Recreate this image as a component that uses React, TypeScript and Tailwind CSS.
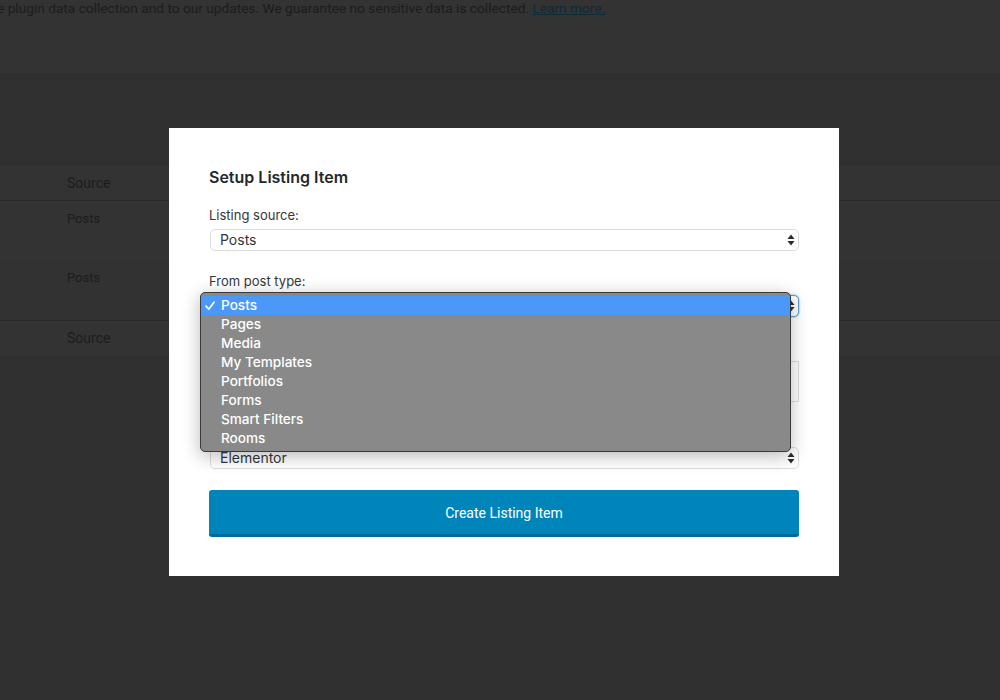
import React from "react";

const Arrows = ({ color = "#2c2c2c" }: { color?: string }) => (
  <svg width="8" height="12" viewBox="0 0 8 12" className="shrink-0">
    <path d="M4 0.5 L7.5 5 L0.5 5 Z" fill={color} />
    <path d="M4 11.5 L7.5 7 L0.5 7 Z" fill={color} />
  </svg>
);

const FakeSelect = ({ value, focused = false }: { value: string; focused?: boolean }) => (
  <div
    className={
      "ml-px flex h-[22px] items-center justify-between rounded-[5px] border bg-white pl-[9px] pr-[3px] text-[14px] text-[#32373c] " +
      (focused
        ? "border-[#5b9dd9] shadow-[0_0_2px_rgba(30,140,190,0.8)]"
        : "border-[#dcdcdc]")
    }
  >
    <span className="leading-none">{value}</span>
    <Arrows />
  </div>
);

const Label = ({ children }: { children?: React.ReactNode }) => (
  <div className="h-[16px] text-[13px] leading-[16px] text-[#32373c]">{children}</div>
);

const items = [
  "Posts",
  "Pages",
  "Media",
  "My Templates",
  "Portfolios",
  "Forms",
  "Smart Filters",
  "Rooms",
];

export default function App() {
  return (
    <div
      className="relative h-[700px] w-[1000px] overflow-hidden bg-[#303030]"
      style={{ fontFamily: "Roboto, 'Liberation Sans', sans-serif" }}
    >
      {/* Background page (dimmed) */}
      <div className="h-[75px] border-b border-[#2b2b2b] bg-[#333333]">
        <div className="ml-[-3px] whitespace-nowrap text-[13.7px] leading-[16px] text-[#1c1c1c]">
          e plugin data collection and to our updates. We guarantee no sensitive data is collected.{" "}
          <span className="text-[#0d2a36] underline">Learn more.</span>
        </div>
      </div>
      <div className="h-[90px]" />
      <div className="text-[14px] text-[#1c1c1c]">
        <div className="flex h-[36px] items-center border-b border-[#2a2a2a] bg-[#333333] pl-[67px] pt-[1px]">
          Source
        </div>
        <div className="h-[60px] bg-[#333333] pl-[67px] pt-[10px] text-[13px] leading-[16px]">Posts</div>
        <div className="h-[60px] border-b border-[#2a2a2a] bg-[#323232] pl-[67px] pt-[9px] text-[13px] leading-[16px]">
          Posts
        </div>
        <div className="flex h-[35px] items-center bg-[#333333] pl-[67px]">Source</div>
      </div>

      {/* Modal */}
      <div
        className="absolute left-[169px] top-[128px] flex h-[448px] w-[670px] flex-col bg-white px-[40px] pt-[39px]"
        style={{ fontFamily: "Inter, Roboto, 'Liberation Sans', sans-serif" }}
      >
        <div className="h-[20px] text-[16px] font-semibold leading-[20px] text-[#23282d]">
          Setup Listing Item
        </div>
        <div className="mt-[20px]">
          <Label>Listing source:</Label>
        </div>
        <div className="mt-[6px]">
          <FakeSelect value="Posts" />
        </div>
        <div className="mt-[22px]">
          <Label>From post type:</Label>
        </div>
        <div className="mt-[6px]">
          <FakeSelect value="Posts" focused />
        </div>
        <div className="mt-[22px]">
          <Label />
        </div>
        <div className="ml-px mt-[6px] h-[41px] border border-[#dddddd] bg-white" />
        <div className="mt-[23px]">
          <Label />
        </div>
        <div className="mt-[6px]">
          <FakeSelect value="Elementor" />
        </div>
        <button
          className="mt-[21px] flex h-[47px] w-full items-center justify-center rounded-[3px] border-b-[3px] border-[#006a99] bg-[#0085ba] pt-[2px] text-[14px] text-white"
          style={{ fontFamily: "Roboto, 'Liberation Sans', sans-serif" }}
        >
          Create Listing Item
        </button>
      </div>

      {/* Native dropdown popup */}
      <div
        className="absolute left-[200px] top-[292px] w-[591px] rounded-[5px] border border-[#3a3a3a] bg-[#898989] py-[3px] shadow-[0_4px_18px_rgba(0,0,0,0.28)]"
        style={{ fontFamily: "Inter, Roboto, 'Liberation Sans', sans-serif" }}
      >
        {items.map((it, i) => (
          <div
            key={it}
            className={
              "relative flex h-[19px] items-center pl-[20px] text-[13.6px] font-medium text-white " +
              (i === 0 ? "bg-[#4a98f8]" : "")
            }
          >
            {i === 0 && (
              <svg width="10" height="10" viewBox="0 0 10 10" className="absolute left-[4px] top-[5px]">
                <path d="M1 5.2 L3.8 8.2 L9 1.2" fill="none" stroke="white" strokeWidth="1.7" strokeLinecap="round" strokeLinejoin="round" />
              </svg>
            )}
            <span className="leading-none">{it}</span>
          </div>
        ))}
      </div>
    </div>
  );
}
